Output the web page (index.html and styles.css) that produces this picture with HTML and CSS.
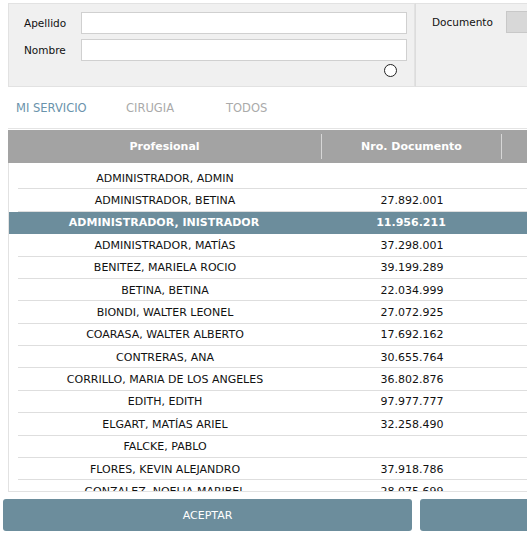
FILE: index.html
```html
<!DOCTYPE html>
<html lang="es">
<head>
  <meta charset="UTF-8">
  <title>Profesionales</title>
  <link rel="stylesheet" href="styles.css">
</head>
<body>
<div class="page">
  <div class="filters">
    <div class="filter-main">
      <div class="field">
        <label>Apellido</label>
        <input type="text">
      </div>
      <div class="field">
        <label>Nombre</label>
        <input type="text">
      </div>
      <div class="radio-row"><span class="radio"></span></div>
    </div>
    <div class="filter-doc">
      <label>Documento</label>
      <input type="text" class="doc-input">
    </div>
  </div>

  <div class="tabs">
    <span class="tab active">MI SERVICIO</span>
    <span class="tab">CIRUGIA</span>
    <span class="tab">TODOS</span>
  </div>

  <div class="grid">
    <div class="grid-head">
      <div class="col col-name">Profesional</div>
      <div class="col col-doc">Nro. Documento</div>
      <div class="col col-extra"></div>
    </div>
    <div class="grid-body" id="rows"></div>
  </div>

  <div class="actions">
    <button class="btn btn-ok">ACEPTAR</button>
    <button class="btn btn-cancel"></button>
  </div>
</div>

<script>
  const profesionales = [
    ['ADMINISTRADOR, ADMIN', ''],
    ['ADMINISTRADOR, BETINA', '27.892.001'],
    ['ADMINISTRADOR, INISTRADOR', '11.956.211'],
    ['ADMINISTRADOR, MATÍAS', '37.298.001'],
    ['BENITEZ, MARIELA ROCIO', '39.199.289'],
    ['BETINA, BETINA', '22.034.999'],
    ['BIONDI, WALTER LEONEL', '27.072.925'],
    ['COARASA, WALTER ALBERTO', '17.692.162'],
    ['CONTRERAS, ANA', '30.655.764'],
    ['CORRILLO, MARIA DE LOS ANGELES', '36.802.876'],
    ['EDITH, EDITH', '97.977.777'],
    ['ELGART, MATÍAS ARIEL', '32.258.490'],
    ['FALCKE, PABLO', ''],
    ['FLORES, KEVIN ALEJANDRO', '37.918.786'],
    ['GONZALEZ, NOELIA MARIBEL', '28.075.699']
  ];

  const rows = document.getElementById('rows');
  profesionales.forEach((p, i) => {
    const row = document.createElement('div');
    row.className = 'row' + (i === 2 ? ' selected' : '');
    row.innerHTML = `
      <div class="col col-name">${p[0]}</div>
      <div class="col col-doc">${p[1]}</div>
      <div class="col col-extra"></div>
    `;
    rows.appendChild(row);
  });
</script>
</body>
</html>
```

FILE: styles.css
```css
html, body {
  margin: 0;
  padding: 0;
  overflow: hidden;
}
body {
  font-family: "DejaVu Sans", Verdana, sans-serif;
  font-size: 11px;
  color: #111;
  background: #fff;
}
.page {
  width: 640px;
}
.filters {
  display: flex;
  margin: 3px 0 0 8px;
  height: 84px;
}
.filter-main {
  width: 407px;
  background: #f0f0f0;
  border: 1px solid #e2e2e2;
  padding: 5px 0 0 0;
  box-sizing: border-box;
}
.field {
  display: flex;
  align-items: center;
  height: 27px;
}
.field label {
  width: 72px;
  padding-left: 15px;
  box-sizing: border-box;
  font-size: 10.5px;
}
.field input, .doc-input {
  width: 326px;
  height: 22px;
  box-sizing: border-box;
  border: 1px solid #d0d0d0;
  background: #fff;
  margin: 0;
}
.radio-row {
  display: flex;
  justify-content: flex-end;
  padding-right: 17px;
  padding-top: 1px;
}
.radio {
  width: 13px;
  height: 13px;
  border: 1.5px solid #222;
  border-radius: 50%;
  background: #fff;
  box-sizing: border-box;
}
.filter-doc {
  flex: 1;
  display: flex;
  align-items: flex-start;
  background: #f0f0f0;
  border: 1px solid #e2e2e2;
  border-left: 1px solid #dcdcdc;
  padding: 7px 0 0 16px;
}
.filter-doc label {
  font-size: 10.5px;
  line-height: 22px;
  width: 74px;
}
.filter-doc .doc-input {
  width: 120px;
  background: #d8d8d8;
  border-color: #c8c8c8;
}
.tabs {
  display: flex;
  margin: 0 0 0 8px;
  height: 41px;
  align-items: center;
  border-bottom: 1px solid #e4e4e4;
  width: 600px;
}
.tab {
  font-size: 11.5px;
  color: #aaa;
  width: 100px;
  box-sizing: border-box;
}
.tab:first-child {
  width: 118px;
  padding-left: 8px;
}
.tab.active {
  color: #6a93ab;
}
.grid {
  margin: 1px 0 0 8px;
  width: 620px;
}
.grid-head {
  display: flex;
  height: 33px;
  background: #a3a3a3;
  color: #fff;
  font-weight: bold;
  font-size: 11px;
  align-items: center;
}
.grid-head .col {
  height: 25px;
  line-height: 25px;
}
.grid-head .col-name {
  border-right: 1px solid #d6d6d6;
}
.grid-head .col-doc {
  border-right: 1px solid #d6d6d6;
}
.col {
  text-align: center;
  box-sizing: border-box;
}
.col-name {
  width: 314px;
}
.col-doc {
  width: 180px;
}
.col-extra {
  flex: 1;
}
.grid-body {
  height: 329px;
  overflow: hidden;
  border-left: 1px solid #e2e2e2;
  border-bottom: 1px solid #e2e2e2;
  box-sizing: border-box;
  padding-top: 4px;
}
.row {
  display: flex;
  height: 22.38px;
  align-items: center;
  position: relative;
  font-size: 11px;
}
.row::after {
  content: "";
  position: absolute;
  left: 9px;
  right: 0;
  bottom: 0;
  border-bottom: 1px solid #dedede;
}
.row .col-name {
  margin-left: -1px;
}
.row.selected {
  background: #6c8d9c;
  color: #fff;
  font-weight: bold;
  margin-left: -1px;
}
.row.selected::after {
  display: none;
}
.actions {
  display: flex;
  gap: 8px;
  margin: 7px 0 0 3px;
}
.btn {
  height: 32px;
  border: none;
  border-radius: 3px;
  background: #6c8d9c;
  color: #fff;
  font-family: "DejaVu Sans", Verdana, sans-serif;
  font-size: 11px;
  cursor: pointer;
}
.btn-ok {
  width: 409px;
}
.btn-cancel {
  width: 200px;
}
```
